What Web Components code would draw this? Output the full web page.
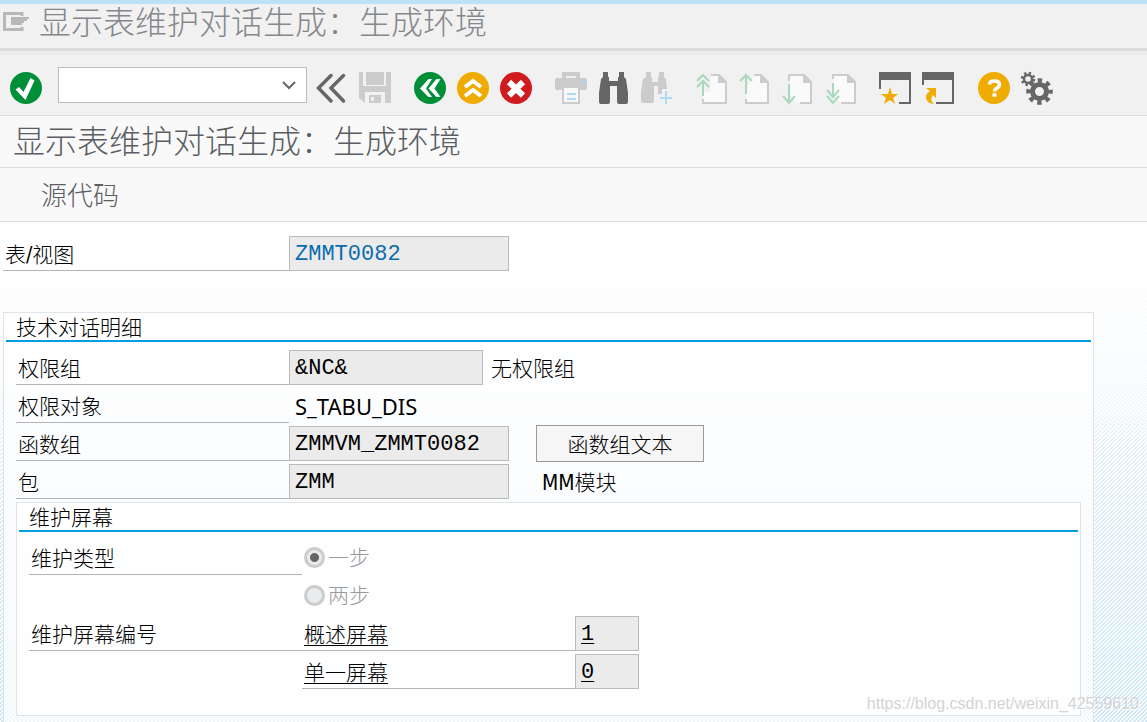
<!DOCTYPE html>
<html lang="zh-CN">
<head>
<meta charset="utf-8">
<title>显示表维护对话生成：生成环境</title>
<style>
html, body { margin: 0; }
body { min-height: 100vh; display: flex; background: #fff; color: #000;
  font: 300 21px/34px "DejaVu Sans Condensed", "Noto Sans CJK SC", sans-serif; }
</style>
</head>
<body>
<gui-window></gui-window>
<script>
const ICONS = {
  ok: '<circle cx="16" cy="16" r="16" fill="#008f39"/><path d="M5.500 17.500 9 15l4.500 5L20.500 6l4 2.500L15.500 28z" fill="#fff"/>',
  collapse: '<path d="M15 3.500 2.500 16 15 29M27.500 3.500 15 16l12.500 13" fill="none" stroke="#666" stroke-width="3.500" stroke-linecap="round"/>',
  save: '<path d="M0 0h4v14h23V0h4q1 0 1 1v30h-6V20H6v11L0 26V1z" fill="#ccc"/><path d="M7 0h18v13H7z" fill="#ccc"/><path d="M10 23h12v8H10z" fill="#ccc"/><path d="M12 25h3v4h-3z" fill="#f1f1f1"/>',
  back: '<circle cx="16" cy="16" r="16" fill="#008f39"/><path d="m14.500 7-8.500 9.500L14.500 25H18l-6-8.500L18 7zM22.500 7l-8 9.500 8 8.500h4l-6-8.500L26.500 7z" fill="#fff"/>',
  exit: '<circle cx="16" cy="16" r="16" fill="#f0ab00"/><path d="m8 15 8-6 8 6M8 24l8-6 8 6" fill="none" stroke="#fff" stroke-width="4"/>',
  cancel: '<circle cx="16" cy="16" r="16" fill="#d01b1f"/><path d="m9 10 14 13.500M23 10 9 23.500" fill="none" stroke="#fff" stroke-width="6"/>',
  print: '<path d="M8 6V1h16v5M8 18v13h16V18" fill="none" stroke="#ccc" stroke-width="2"/><path d="M7 1h18v5h-4V4H11v2H7z" fill="#ccc"/><rect y="6" width="32" height="12" rx="2" fill="#ccc"/><path d="M9 16h14v14H9z" fill="#f8f8f8"/><path d="M12 22h9M12 27h9M25 10h5" stroke="#abdcf3" stroke-width="2"/>',
  find: '<path d="M5 0h5v5h1v4h9V5h1V0h5v5l2 2 2 14v9q0 2-2 2h-7q-2 0-2-2V14h-7v16q0 2-2 2H3q-2 0-2-2v-9L3 7l2-2z" fill="#666"/>',
  findnext: '<path d="M5 0h5v5h1v5h6V5h1V0h5v5l2 2 1 10h-5v5h-4v-8h-4v15q0 2-2 2H2q-2 0-2-2v-9L2 7l3-2z" fill="#ccc"/><path d="M25 19v13M19 26h12" stroke="#abdcf3" stroke-width="2"/>',
  first: '<path d="M15 3h8l8 8v20H7V20h7z" fill="#fafafa"/><path d="M15 3h8l7 7v21H7v-4" fill="none" stroke="#ccc" stroke-width="2"/><path d="M22 2v9h9z" fill="#ccc"/><path d="M7 24V8M1 9l6-6 6 6M1 15l6-6 6 6" fill="none" stroke="#a9d8bd" stroke-width="2"/>',
  prev: '<path d="M15 3h8l7 8v20H7V18z" fill="#fafafa"/><path d="M15 3h7l7 7v21H7v-4" fill="none" stroke="#ccc" stroke-width="2"/><path d="M21 2v9h9z" fill="#ccc"/><path d="M7 22V3M1 9l6-6 6 6" fill="none" stroke="#a9d8bd" stroke-width="2"/>',
  next: '<path d="M7 3h15l7 8v20H14L7 21z" fill="#fafafa"/><path d="M7 9V3h15l7 7v21H18" fill="none" stroke="#ccc" stroke-width="2"/><path d="M21 2v9h9z" fill="#ccc"/><path d="M7 12v19M1 24l6 7 6-7" fill="none" stroke="#a9d8bd" stroke-width="2"/>',
  last: '<path d="M8 3h15l7 8v20H15L8 21z" fill="#fafafa"/><path d="M8 7V3h15l7 7v21H16" fill="none" stroke="#ccc" stroke-width="2"/><path d="M22 2v9h9z" fill="#ccc"/><path d="M8 11v15M2 18l6 7 6-7M2 24l6 7 6-7" fill="none" stroke="#a9d8bd" stroke-width="2"/>',
  session: '<path d="M-1 0h32v32H19v-2h10V8H1v9h-2z" fill="#666"/><path d="m10 15 2 7h6l-5 4 2 6-5-4-6 4 2-6-5-4h7z" fill="#f0ab00"/>',
  shortcut: '<path d="M-1 0h32v32H13v-2h16V8H1v5h-2z" fill="#666"/><path d="M3 16h10v10l-3-3q-4 5 1 9-8-1-8-7 0-3 4-6z" fill="#f0ab00"/>',
  help: '<circle cx="16" cy="16" r="16" fill="#f0ab00"/><path d="M11.500 12.500q0-3.500 5-3.500t5 3.500q0 2-2.500 3.500t-2.500 3.500M14.500 23h4" fill="none" stroke="#fff" stroke-width="3.500"/>',
  gears: '<g fill="none" stroke="#666"><circle cx="7" cy="7" r="4" stroke-width="2.500"/><circle cx="7" cy="7" r="6" stroke-width="2.500" stroke-dasharray="2.356"/><circle cx="18.500" cy="19.500" r="7" stroke-width="5"/><circle cx="18.500" cy="19.500" r="11" stroke-width="4.500" stroke-dasharray="4.320" stroke-dashoffset="2.160"/></g>',
  menu: '<path d="M19 4V1.500H1.500v16H19V15" fill="none" stroke="#b8b8b8" stroke-width="3"/><path d="M8 5h18v2h-2v2h-3v2h-2v2H8z" fill="#b8b8b8"/>'
};

function define(name, html, setup) {
  const template = document.createElement('template');
  template.innerHTML = html;
  customElements.define(name, class extends HTMLElement {
    constructor() {
      super();
      this.attachShadow({ mode: 'open' }).append(template.content.cloneNode(true));
    }
    connectedCallback() { if (setup) setup(this, this.shadowRoot); }
  });
}

define('icon-button', `
<style>
:host { display: block; width: 32px; height: 33px; }
button { display: block; width: 100%; height: 100%; padding: 0; border: 0; background: none; }
svg { display: block; width: 32px; height: 33px; overflow: visible; }
</style>
<button type="button"><svg viewBox="0 0 32 33" aria-hidden="true"></svg></button>`,
(host, root) => {
  root.querySelector('button').setAttribute('aria-label', host.getAttribute('label'));
  root.querySelector('svg').innerHTML = ICONS[host.getAttribute('name')];
});

define('command-field', `
<style>
:host { display: flex; box-sizing: border-box; width: 249px; height: 36px; border: 1px solid #bbb; background: #fff; }
input { flex: 1; min-width: 0; border: 0; padding: 0 6px; background: none; font: inherit; outline: 0; }
button { width: 34px; padding: 0; border: 0; background: none; }
svg { display: block; margin: auto; }
</style>
<input aria-label="命令"><button type="button" aria-label="历史"><svg width="14" height="9" fill="none" stroke="#666" stroke-width="2"><path d="m1 1 6 6 6-6"/></svg></button>`);

define('title-bar', `
<style>
:host { display: flex; align-items: flex-start; gap: 10px; height: 44px; padding: 0 3px; background: #f1f1f1;
  border-top: 4px solid #bbe1f7; border-bottom: 3px solid #dcdcdc; color: #84888c; font-size: 32px; line-height: 38px; }
svg { width: 26px; height: 19px; margin-top: 8px; }
</style>
<svg aria-hidden="true">${ICONS.menu}</svg><slot></slot>`);

define('tool-bar', `
<style>
:host { display: flex; align-items: flex-start; height: 48px; padding: 12px 10px 0; background: #f1f1f1;
  border-top: 4px solid #ebebeb; border-bottom: 1px solid #dcdcdc; }
command-field { margin: 0 9px 0 16px; }
.icons { display: flex; gap: 23px; }
.icons div, .first { display: flex; gap: 11px; padding-top: 5px; }
</style>
<div class="first"><icon-button name="ok" label="确认"></icon-button></div>
<command-field></command-field>
<div class="icons">
  <div><icon-button name="collapse" label="收起"></icon-button><icon-button name="save" label="保存"></icon-button></div>
  <div><icon-button name="back" label="返回"></icon-button><icon-button name="exit" label="退出"></icon-button><icon-button name="cancel" label="取消"></icon-button></div>
  <div><icon-button name="print" label="打印"></icon-button><icon-button name="find" label="查找"></icon-button><icon-button name="findnext" label="继续查找"></icon-button></div>
  <div><icon-button name="first" label="首页"></icon-button><icon-button name="prev" label="上一页"></icon-button><icon-button name="next" label="下一页"></icon-button><icon-button name="last" label="末页"></icon-button></div>
  <div><icon-button name="session" label="新建会话"></icon-button><icon-button name="shortcut" label="快捷方式"></icon-button></div>
  <div><icon-button name="help" label="帮助"></icon-button><icon-button name="gears" label="布局"></icon-button></div>
</div>`);

define('screen-header', `
<style>
:host { display: block; background: #f9f9f9; color: #5a5e62; }
h1 { margin: 0; padding: 0 13px; height: 51px; font-size: 32px; font-weight: 300; line-height: 53px; border-bottom: 1px solid #dcdcdc; }
nav { height: 53px; padding: 0 41px; border-bottom: 1px solid #dcdcdc; }
button { padding: 0; border: 0; background: none; color: inherit; font: inherit; font-size: 26px; line-height: 57px; }
</style>
<h1><slot></slot></h1><nav><button type="button">源代码</button></nav>`);

define('form-row', `
<style>
:host { display: flex; height: 35px; }
</style><slot></slot>`);

define('form-caption', `
<style>
:host { display: block; box-sizing: border-box; width: var(--caption, 273px); height: 35px; padding: 2px 2px 0; line-height: 34px; border-bottom: 1px solid #b4b4b4; }
:host([blank]) { border-color: transparent; }
</style><slot></slot>`);

define('form-field', `
<style>
:host { display: flex; height: 35px; }
label { box-sizing: border-box; width: var(--caption, 273px); height: 35px; padding: 2px 2px 0; line-height: 34px; border-bottom: 1px solid #b4b4b4; }
input { box-sizing: border-box; width: var(--field, 220px); height: 35px; margin: 0; padding: 2px 5px 0; border: 1px solid #bbb; border-radius: 0;
  background: #ebebeb; color: inherit; font: 400 22px/30px "Liberation Mono", monospace; outline: 0; }
:host([key]) input { color: #0a6cae; }
:host([linked]) label, :host([linked]) input { text-decoration: underline; text-decoration-thickness: 1px; text-underline-offset: 3px; }
</style>
<label for="f"></label><input id="f" readonly>`,
(host, root) => {
  root.querySelector('label').textContent = host.getAttribute('label');
  root.querySelector('input').value = host.getAttribute('value');
});

define('form-radio', `
<style>
:host { display: block; height: 35px; padding-left: 2px; color: #999; line-height: 36px; }
label { display: flex; align-items: center; gap: 3px; height: 35px; }
input { appearance: none; box-sizing: border-box; width: 21px; height: 21px; margin: 0; border: 3px solid #ccc; border-radius: 50%; background: #e8ecef; }
input:checked { background: radial-gradient(circle, #666 4px, #e8ecef 5px); }
</style>
<label><input type="radio" disabled><slot></slot></label>`,
(host, root) => { root.querySelector('input').checked = host.hasAttribute('checked'); });

define('form-group', `
<style>
:host { display: flex; flex-direction: column; box-sizing: border-box; border: 1px solid #e1e4e6; background: rgba(255,255,255,.7); }
h2 { margin: 0; padding: 0 12px; height: 27px; background: #fff; font-size: 21px; font-weight: 300; line-height: 31px; }
hr { margin: 0 2px; border: 0; height: 2px; background: #009de0; }
.body { display: flex; flex-direction: column; gap: 3px; padding: 8px 12px 26px; }
:host([open-ended]) { flex: 1; border-bottom: 0; }
:host([open-ended]) .body { padding-bottom: 6px; }
</style>
<h2></h2><hr><div class="body"><slot></slot></div>`,
(host, root) => { root.querySelector('h2').textContent = host.getAttribute('heading'); });

define('gui-window', `
<style>
:host { display: flex; flex-direction: column; flex: 1; min-width: 0; position: relative; }
main { flex: 1; display: flex; flex-direction: column; padding: 14px 53px 0 3px;
  background: linear-gradient(#fff, rgba(255,255,255,.85) 25%, rgba(255,255,255,.3) 60%, transparent), linear-gradient(135deg, #cbe5f4 25%, #fff 25%, #fff 50%, #cbe5f4 50%, #cbe5f4 75%, #fff 75%) 0 0 / 4px 4px; }
.key { --caption: 286px; margin-bottom: 41px; }
.short { --field: 194px; }
.screen { --field: 64px; }
.note { padding: 2px 8px 0; line-height: 34px; }
.value { padding: 0 6px; font-family: "Noto Sans", sans-serif; font-size: 22px; font-weight: 400; line-height: 36px; }
.far { padding-left: 33px; }
button { box-sizing: border-box; width: 168px; height: 37px; margin: -1px 0 0 27px; padding: 2px 0 0; border: 1px solid #999; background: #f6f6f6; color: inherit; font: inherit; }
.mark { position: absolute; right: 8px; bottom: 8px; color: #d2d4d6; font: 400 16px/20px "Liberation Sans", sans-serif; text-shadow: 1px 1px #fff; }
</style>
<title-bar>显示表维护对话生成：生成环境</title-bar>
<tool-bar></tool-bar>
<screen-header>显示表维护对话生成：生成环境</screen-header>
<main>
  <form-field class="key" key label="表/视图" value="ZMMT0082"></form-field>
  <form-group open-ended heading="技术对话明细">
    <form-row><form-field class="short" label="权限组" value="&amp;NC&amp;"></form-field><span class="note">无权限组</span></form-row>
    <form-row><form-caption>权限对象</form-caption><span class="value">S_TABU_DIS</span></form-row>
    <form-row><form-field label="函数组" value="ZMMVM_ZMMT0082"></form-field><button type="button">函数组文本</button></form-row>
    <form-row><form-field label="包" value="ZMM"></form-field><span class="note far">MM模块</span></form-row>
    <form-group heading="维护屏幕">
      <form-row><form-caption>维护类型</form-caption><form-radio checked>一步</form-radio></form-row>
      <form-row><form-caption blank></form-caption><form-radio>两步</form-radio></form-row>
      <form-row><form-caption>维护屏幕编号</form-caption><form-field class="screen" linked label="概述屏幕" value="1"></form-field></form-row>
      <form-row><form-caption blank></form-caption><form-field class="screen" linked label="单一屏幕" value="0"></form-field></form-row>
    </form-group>
  </form-group>
</main>
<span class="mark">https://blog.csdn.net/weixin_42559610</span>`);
</script>
</body>
</html>
